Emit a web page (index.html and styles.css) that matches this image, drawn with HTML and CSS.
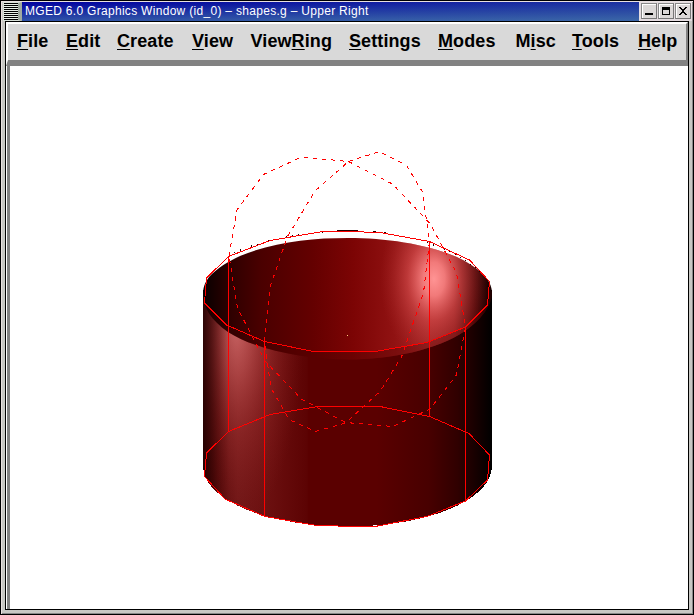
FILE: index.html
```html
<!DOCTYPE html>
<html lang="en">
<head>
<meta charset="utf-8">
<title>MGED 6.0 Graphics Window</title>
<link rel="stylesheet" href="styles.css">
</head>
<body>
<div class="window">
  <header class="titlebar">
    <div class="sysmenu"></div>
    <div class="title"><span>MGED 6.0 Graphics Window (id_0) – shapes.g – Upper Right</span></div>
    <div class="controls">
      <div class="control"><svg width="12" height="13" viewBox="0 0 12 13" shape-rendering="crispEdges"><path d="M2 9h8v2H2z"/></svg></div>
      <div class="control"><svg width="12" height="13" viewBox="0 0 12 13" shape-rendering="crispEdges"><path d="M2 3h8v8H2zM3 6v4h6V6z" fill-rule="evenodd"/></svg></div>
      <div class="control"><svg width="12" height="13" viewBox="0 0 12 13" shape-rendering="crispEdges"><path d="M2 3h2v1h1v1h2V4h1V3h2v1H9v1H8v1H7v2h1v1h1v1h1v1H8v-1H7V9H5v1H4v1H2v-1h1V9h1V8h1V6H4V5H3V4H2z"/></svg></div>
    </div>
  </header>
  <div class="client">
    <nav class="menubar">
      <span><u>F</u>ile</span><span><u>E</u>dit</span><span><u>C</u>reate</span><span><u>V</u>iew</span><span>View<u>R</u>ing</span><span><u>S</u>ettings</span><span><u>M</u>odes</span><span>M<u>i</u>sc</span><span><u>T</u>ools</span><span><u>H</u>elp</span>
    </nav>
    <main class="canvas">
      <svg class="scene" viewBox="10 66 678 543" width="678" height="543">
        <defs>
          <linearGradient id="side" gradientUnits="userSpaceOnUse" x1="203" x2="492" y1="0" y2="0">
            <stop offset="0" stop-color="#300000"/><stop offset=".05" stop-color="#5a0a0a"/><stop offset=".12" stop-color="#701616"/><stop offset=".22" stop-color="#6c1010"/><stop offset=".36" stop-color="#5c0303"/><stop offset=".365" stop-color="#5a0000"/><stop offset=".6" stop-color="#5a0000"/><stop offset=".78" stop-color="#480000"/><stop offset=".88" stop-color="#300000"/><stop offset=".96" stop-color="#100000"/><stop offset="1" stop-color="#000"/>
          </linearGradient>
          <radialGradient id="sideglow" gradientUnits="userSpaceOnUse" cx="0" cy="0" r="1" gradientTransform="translate(236 325) scale(68 200)">
            <stop offset="0" stop-color="#ff9494" stop-opacity=".62"/><stop offset=".25" stop-color="#f07878" stop-opacity=".45"/><stop offset=".55" stop-color="#d05050" stop-opacity=".24"/><stop offset="1" stop-color="#a03030" stop-opacity="0"/>
          </radialGradient>
          <linearGradient id="edge" gradientUnits="userSpaceOnUse" x1="203" x2="229" y1="0" y2="0">
            <stop offset="0" stop-color="#200000" stop-opacity=".8"/><stop offset="1" stop-color="#400000" stop-opacity="0"/>
          </linearGradient>
          <linearGradient id="inner" gradientUnits="userSpaceOnUse" x1="203" x2="492" y1="0" y2="0">
            <stop offset="0" stop-color="#080000"/><stop offset=".1" stop-color="#300000"/><stop offset=".2" stop-color="#4a0000"/><stop offset=".38" stop-color="#640000"/><stop offset=".52" stop-color="#7c0404"/><stop offset=".66" stop-color="#901212"/><stop offset=".78" stop-color="#a42424"/><stop offset=".87" stop-color="#901c1c"/><stop offset=".94" stop-color="#500808"/><stop offset="1" stop-color="#140000"/>
          </linearGradient>
          <radialGradient id="innerglow" gradientUnits="userSpaceOnUse" cx="0" cy="0" r="1" gradientTransform="translate(434 279) scale(54 84)">
            <stop offset="0" stop-color="#ff9494"/><stop offset=".2" stop-color="#ff8888" stop-opacity=".86"/><stop offset=".5" stop-color="#e85c5c" stop-opacity=".46"/><stop offset="1" stop-color="#b03030" stop-opacity="0"/>
          </radialGradient>
          <path id="mouth" d="M203 294C203 285 207 280 209 277C217 268 229 261 240 256C274 242 311 238 348 238C389 238 433 245 463 260C479 269 492 279 492 293C492 306 481 320 465 331C437 350 391 359.500 348 359.500C304 359.500 254 349 228 332C211 320 203 307 203 294Z"/>
          <clipPath id="mouthclip"><use href="#mouth"/></clipPath>
        </defs>

        <g id="body" shape-rendering="crispEdges">
          <path fill="url(#side)" d="M203 290V466C203 500 267 526.5 347.5 526.5S492 500 492 466V290Z"/>
          <path fill="url(#sideglow)" d="M203 290V466C203 492 242 515 300 523H307V290Z"/>
          <path fill="url(#edge)" d="M203 290V466C203 478 212 489 229 501V290Z"/>
        </g>
        <g clip-path="url(#mouthclip)">
          <rect x="203" y="236" width="290" height="126" fill="url(#inner)"/>
          <rect x="380" y="190" width="112" height="172" fill="url(#innerglow)"/>
          <path fill="#400000" fill-opacity=".28" d="M203 290L204.500 303L226.500 325L264.500 341.500L313.500 351H375L427 342.500L465.500 327L487.500 305L492 285V365H203Z"/>
        </g>

        <g fill="none" stroke="#200000" shape-rendering="crispEdges">
          <path d="M337 230.500H358M373 231.500h3M384 232.500h2"/>
          <path stroke-dasharray="1 5" d="M229 255Q274 234 335 231.500M392 234.500Q450 243 489 279"/>
        </g>

        <g fill="none" stroke="#f00" shape-rendering="crispEdges">
          <path d="M206.500 278L228.500 256.500L270 240.500L320 232L348 231.500L380 232.500L429.500 241.500L469.500 260L489.500 281.500L487.500 305L465.500 327L427 342.500L375 351.500H313.500L264.500 341.500L226.500 325L204.500 303Z"/>
          <path d="M206.500 453L228.500 431.500L270 414.500L318 406.500H380L429.500 416.500L469 433.500L489.500 455L487.500 480L465.500 501L427 516.500L375 526.500H350L313.500 525L265 516.500L225 499L204.500 476.500Z"/>
          <path d="M228.500 256V432M264.500 341V517M429.500 241V417M465.500 327V501"/>
          <path stroke-dasharray="4.200 4.800" d="M229 256L237 210L263.500 174.500L301.500 157L348.500 161.500L392.500 184L430 223.500L440 242L456.500 273L465.500 327L456.500 375L430 409L393 426.500L345.500 422.500L301.500 399L265 361L237.500 308Z"/>
          <path stroke-dasharray="4.200 4.800" d="M348.500 161.500L379.500 151.500L406.500 165.500L422.500 192L429.500 241L423.500 293L401.500 357L380 391.500L345.500 423L315.500 431.500L289 419.500L271 388L264.500 341.500L270 287L287.500 236.500L315 191Z"/>
        </g>
        <rect x="347" y="335" width="1" height="1" fill="#ffd080"/>
      </svg>
    </main>
  </div>
</div>
</body>
</html>
```
FILE: styles.css
```css
* { box-sizing: border-box; }

body {
  margin: 0;
  width: 694px;
  height: 615px;
  overflow: hidden;
  background: #000;
  font-family: "Liberation Sans", Arial, sans-serif;
}

.window {
  width: 694px;
  height: 615px;
  display: flex;
  flex-direction: column;
  border: 1px solid #000;
  background: #c8c8c4;
  box-shadow: inset 1px 1px #e8e0e0, inset -1px -1px #888;
}

.titlebar {
  height: 20px;
  display: flex;
  padding: 1px 1px 0 2px;
}

.sysmenu {
  width: 19px;
  border: 1px solid #d8e0d8;
  border-right: 4px solid #a0aaa0;
  background: repeating-linear-gradient(#000 0 1px, #e8f0e8 1px 2px);
}

.title {
  flex: 1;
  height: 19px;
  background: linear-gradient(to bottom, rgba(80, 140, 172, 0), rgba(80, 140, 172, .6)), linear-gradient(to right, #0000a0, #1c30a0);
  color: #fff;
  font-size: 12px;
  line-height: 19px;
  white-space: nowrap;
  padding-left: 3px;
}

.title span { letter-spacing: .3px; }

.controls {
  display: flex;
  gap: 1px;
  padding: 1px 1px 0 2px;
  background: #e4dce0;
}

.control {
  width: 16px;
  height: 16px;
  border: 1px solid;
  border-color: #888 #777 #777 #888;
  box-shadow: inset 1px 1px #fff;
  background: #dcd8d8;
}

.control svg { display: block; margin-left: 1px; }

.client {
  flex: 1;
  margin: 0 4px 4px;
  border: 1px solid #000;
  background: #fff;
  display: flex;
  flex-direction: column;
}

.menubar {
  height: 44px;
  display: grid;
  grid-template-columns: 49px 51px 75px 58.5px 98.5px 89px 77.5px 56.5px 66px auto;
  padding-left: 9px;
  border-style: solid;
  border-width: 2px 2px 6px;
  border-color: #fff #828282 #828282 #fff;
  background: #d9d9d9;
  color: #000;
  font-size: 18px;
  font-weight: bold;
  line-height: 35px;
  letter-spacing: .1px;
  white-space: nowrap;
}

.menubar u {
  text-decoration-thickness: 1px;
  text-underline-offset: 2px;
  text-decoration-skip-ink: none;
}

.canvas {
  flex: 1;
  margin-left: 1px;
  border-left: 3px solid #828282;
}

.scene { display: block; }
```
